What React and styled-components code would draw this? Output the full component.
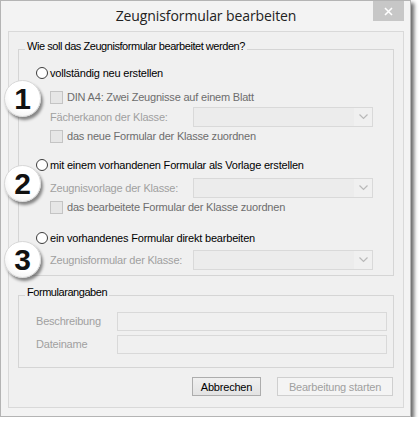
import React from 'react';
import styled, { createGlobalStyle } from 'styled-components';

const GlobalStyle = createGlobalStyle`
    body {
        margin: 0;
        background: #ffffff;
        font-family: "Liberation Sans", Arial, sans-serif;
        font-size: 11px;
        letter-spacing: -0.2px;
    }
`

function Radio({ children, mt }) {
    return (
        <Row $h={20} $mt={mt}>
            <RadioDot />
            <RadioText>{children}</RadioText>
        </Row>
    )
}

function Check({ children, mt }) {
    return (
        <Row $h={18} $mt={mt} $indent={14}>
            <CheckBox />
            <CheckText>{children}</CheckText>
        </Row>
    )
}

function ComboRow({ label, mt }) {
    return (
        <Row $h={20} $mt={mt} $indent={14}>
            <ComboLabel>{label}</ComboLabel>
            <Combo>
                <ComboArrow>
                    <svg width="9" height="6" viewBox="0 0 9 6">
                        <path d="M0.5 0.5 L4.5 4.5 L8.5 0.5" fill="none" stroke="#b9b9b9" strokeWidth="1.2" />
                    </svg>
                </ComboArrow>
            </Combo>
        </Row>
    )
}

function App() {
    return (
        <>
            <GlobalStyle />
            <Window>
                <TitleBar>
                    <span />
                    <Title>Zeugnisformular bearbeiten</Title>
                    <CloseButton>
                        <svg width="9" height="9" viewBox="0 0 9 9">
                            <path d="M1 1 L8 8 M8 1 L1 8" stroke="#ffffff" strokeWidth="1.6" />
                        </svg>
                    </CloseButton>
                </TitleBar>

                <Client>
                    <Group>
                        <Legend>Wie soll das Zeugnisformular bearbeitet werden?</Legend>
                        <GroupBody $pb={5}>
                            <Radio mt={4}>vollständig neu erstellen</Radio>
                            <Check mt={5}>DIN A4: Zwei Zeugnisse auf einem Blatt</Check>
                            <ComboRow mt={1} label="Fächerkanon der Klasse:" />
                            <Check mt={0}>das neue Formular der Klasse zuordnen</Check>

                            <Radio mt={10}>mit einem vorhandenen Formular als Vorlage erstellen</Radio>
                            <ComboRow mt={3} label="Zeugnisvorlage der Klasse:" />
                            <Check mt={0}>das bearbeitete Formular der Klasse zuordnen</Check>

                            <Radio mt={12}>ein vorhandenes Formular direkt bearbeiten</Radio>
                            <ComboRow mt={2} label="Zeugnisformular der Klasse:" />
                        </GroupBody>
                    </Group>

                    <Group $mt={9}>
                        <Legend>Formularangaben</Legend>
                        <GroupBody $pb={13}>
                            <Row $h={20} $mt={6}>
                                <FieldLabel>Beschreibung</FieldLabel>
                                <TextField />
                            </Row>
                            <Row $h={20} $mt={3}>
                                <FieldLabel>Dateiname</FieldLabel>
                                <TextField />
                            </Row>
                        </GroupBody>
                    </Group>

                    <ButtonBar>
                        <Button $w={69}>Abbrechen</Button>
                        <Button $w={116} disabled>Bearbeitung starten</Button>
                    </ButtonBar>
                </Client>

                <Badge $top={79}>1</Badge>
                <Badge $top={164}>2</Badge>
                <Badge $top={240}>3</Badge>
            </Window>
        </>
    )
}

const Window = styled.div`
    position: relative;
    width: 411px;
    height: 417px;
    box-sizing: border-box;
    background: #f3f3f3;
    border: 1px solid #b4b4b4;
    box-shadow: 3px 3px 4px rgba(0, 0, 0, 0.6);
    display: flex;
    flex-direction: column;
    padding: 0 6px 8px 7px;
`

const TitleBar = styled.div`
    height: 30px;
    display: grid;
    grid-template-columns: 1fr auto 1fr;
    align-items: start;
`

const Title = styled.div`
    font-family: "Open Sans", "Noto Sans", sans-serif;
    font-size: 14px;
    color: #222;
    line-height: 30px;
    letter-spacing: -0.1px;
`

const CloseButton = styled.div`
    justify-self: end;
    width: 31px;
    height: 20px;
    background: #c7c7c7;
    display: flex;
    align-items: center;
    justify-content: center;
`

const Client = styled.div`
    flex: 1;
    background: #f0f0f0;
    border: 1px solid #d9d9d9;
    padding: 7px 9px 0 9px;
    display: flex;
    flex-direction: column;
`

const Group = styled.fieldset`
    margin: ${p => p.$mt || 0}px 0 0 0;
    padding: 0;
    border: 1px solid #d5d5d5;
    min-width: 0;
`

const Legend = styled.legend`
    margin-left: 6px;
    padding: 0 2px 6px 2px;
    line-height: 14px;
    color: #000;
    letter-spacing: -0.45px;
`

const GroupBody = styled.div`
    display: flex;
    flex-direction: column;
    padding: 0 0 ${p => p.$pb}px 17px;
`

const Row = styled.div`
    display: flex;
    align-items: center;
    height: ${p => p.$h}px;
    margin-top: ${p => p.$mt || 0}px;
    padding-left: ${p => p.$indent || 0}px;
`

const RadioDot = styled.span`
    width: 12px;
    height: 12px;
    box-sizing: border-box;
    border-radius: 50%;
    border: 1px solid #3c3c3c;
    background: #fff;
    margin-right: 2px;
    flex: none;
`

const RadioText = styled.span`
    color: #000;
`

const CheckBox = styled.span`
    width: 13px;
    height: 13px;
    box-sizing: border-box;
    border: 1px solid #c4c4c4;
    background: #e6e6e6;
    margin-right: 4px;
    flex: none;
`

const CheckText = styled.span`
    color: #6d6d6d;
`

const ComboLabel = styled.span`
    width: 143px;
    color: #a0a0a0;
    flex: none;
`

const Combo = styled.div`
    width: 180px;
    height: 20px;
    box-sizing: border-box;
    border: 1px solid #d9d9d9;
    background: #ececec;
    display: flex;
    justify-content: flex-end;
`

const ComboArrow = styled.div`
    width: 18px;
    background: #f0f0f0;
    display: flex;
    align-items: center;
    justify-content: center;
`

const FieldLabel = styled.span`
    width: 81px;
    color: #a0a0a0;
    flex: none;
`

const TextField = styled.div`
    width: 270px;
    height: 19px;
    box-sizing: border-box;
    border: 1px solid #d9d9d9;
    background: #f0f0f0;
`

const ButtonBar = styled.div`
    display: flex;
    justify-content: flex-end;
    gap: 16px;
    margin-top: 9px;
    padding-right: 1px;
`

const Button = styled.div`
    width: ${p => p.$w}px;
    height: 19px;
    box-sizing: border-box;
    display: flex;
    align-items: center;
    justify-content: center;
    border: 1px solid ${p => p.disabled ? '#cfcfcf' : '#adadad'};
    background: ${p => p.disabled ? '#f4f4f4' : 'linear-gradient(#f0f0f0, #e3e3e3)'};
    color: ${p => p.disabled ? '#a0a0a0' : '#000'};
`

const Badge = styled.div`
    position: absolute;
    left: 3px;
    top: ${p => p.$top}px;
    width: 37px;
    height: 37px;
    box-sizing: border-box;
    border-radius: 50%;
    border: 1px solid #d8d8d8;
    background: radial-gradient(circle at 60% 35%, #ffffff 55%, #e9e9e9 100%);
    box-shadow: 2px 3px 3px rgba(0, 0, 0, 0.45);
    display: flex;
    align-items: center;
    justify-content: center;
    font-family: "Liberation Sans", Arial, sans-serif;
    font-weight: bold;
    font-size: 30px;
    letter-spacing: 0;
    color: #111;
`

export default App
